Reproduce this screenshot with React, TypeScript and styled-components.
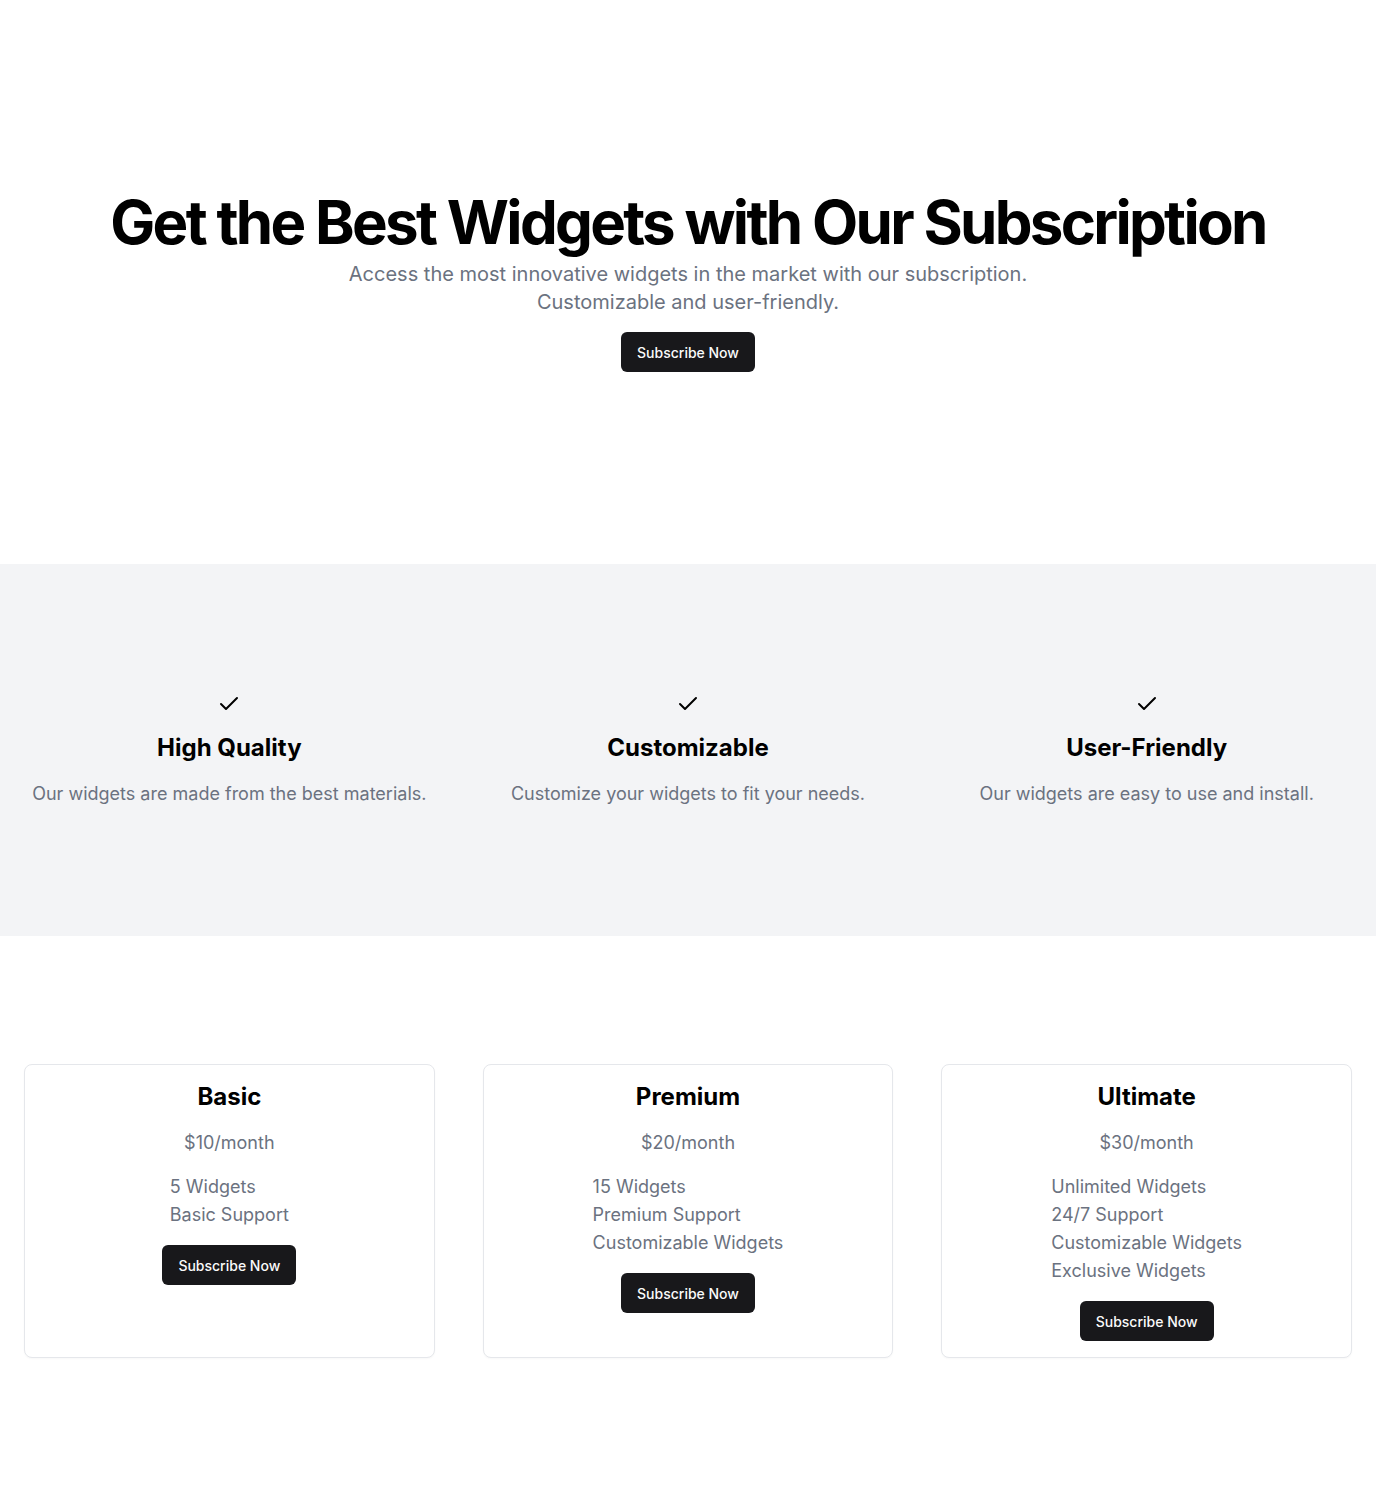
import React from "react";
import styled, { createGlobalStyle } from "styled-components";

const Global = createGlobalStyle`
  * { box-sizing: border-box; }
  html, body { margin: 0; padding: 0; background: #ffffff; }
  body { font-family: Inter, "Noto Sans", sans-serif; color: #000; }
  h1, h2, h3, p, ul { margin: 0; padding: 0; }
`;

const Page = styled.main`
  display: flex;
  flex-direction: column;
  width: 100%;
`;

const Hero = styled.section`
  padding: 192px 24px;
  display: flex;
  flex-direction: column;
  align-items: center;
  text-align: center;
`;

const HeroTitle = styled.h1`
  font-size: 60px;
  line-height: 1;
  font-weight: 700;
  letter-spacing: -0.045em;
  color: #000;
`;

const HeroText = styled.p`
  margin-top: 8px;
  max-width: 700px;
  font-size: 20px;
  line-height: 28px;
  color: #6b7280;
`;

const Button = styled.button`
  height: 40px;
  padding: 0 16px;
  border: none;
  border-radius: 6px;
  background: #18181b;
  color: #fafafa;
  font-family: Inter, sans-serif;
  font-size: 14px;
  font-weight: 500;
  cursor: pointer;
`;

const HeroButton = styled(Button)`
  margin-top: 16px;
`;

const Features = styled.section`
  background: #f3f4f6;
  padding: 128px 24px;
`;

const Grid = styled.div`
  display: grid;
  grid-template-columns: repeat(3, 1fr);
  gap: 48px;
`;

const Feature = styled.div`
  display: flex;
  flex-direction: column;
  align-items: center;
  text-align: center;
  gap: 16px;
`;

const FeatureTitle = styled.h2`
  font-size: 24px;
  line-height: 32px;
  font-weight: 700;
  color: #000;
`;

const FeatureText = styled.p`
  font-size: 18px;
  line-height: 28px;
  color: #6b7280;
`;

const Pricing = styled.section`
  padding: 128px 24px;
`;

const Card = styled.div`
  border: 1px solid #e5e7eb;
  border-radius: 8px;
  background: #fff;
  padding: 16px;
  display: flex;
  flex-direction: column;
  align-items: center;
  gap: 16px;
  box-shadow: 0 1px 2px rgba(0, 0, 0, 0.03);
`;

const PlanName = styled.h3`
  font-size: 24px;
  line-height: 32px;
  font-weight: 700;
  color: #000;
`;

const Price = styled.p`
  font-size: 18px;
  line-height: 28px;
  color: #6b7280;
`;

const List = styled.ul`
  list-style: none;
  text-align: left;
  font-size: 18px;
  line-height: 28px;
  color: #6b7280;
`;

const CheckIcon = () => (
  <svg width="24" height="24" viewBox="0 0 24 24" fill="none" stroke="#000" strokeWidth="2" strokeLinecap="round" strokeLinejoin="round">
    <path d="M20 6 9 17l-5-5" />
  </svg>
);

const features = [
  { title: "High Quality", text: "Our widgets are made from the best materials." },
  { title: "Customizable", text: "Customize your widgets to fit your needs." },
  { title: "User-Friendly", text: "Our widgets are easy to use and install." },
];

const plans = [
  { name: "Basic", price: "$10/month", items: ["5 Widgets", "Basic Support"] },
  { name: "Premium", price: "$20/month", items: ["15 Widgets", "Premium Support", "Customizable Widgets"] },
  { name: "Ultimate", price: "$30/month", items: ["Unlimited Widgets", "24/7 Support", "Customizable Widgets", "Exclusive Widgets"] },
];

export default function App() {
  return (
    <>
      <Global />
      <Page>
        <Hero>
          <HeroTitle>Get the Best Widgets with Our Subscription</HeroTitle>
          <HeroText>
            Access the most innovative widgets in the market with our subscription. Customizable and user-friendly.
          </HeroText>
          <HeroButton>Subscribe Now</HeroButton>
        </Hero>
        <Features>
          <Grid>
            {features.map((f) => (
              <Feature key={f.title}>
                <CheckIcon />
                <FeatureTitle>{f.title}</FeatureTitle>
                <FeatureText>{f.text}</FeatureText>
              </Feature>
            ))}
          </Grid>
        </Features>
        <Pricing>
          <Grid>
            {plans.map((p) => (
              <Card key={p.name}>
                <PlanName>{p.name}</PlanName>
                <Price>{p.price}</Price>
                <List>
                  {p.items.map((i) => (
                    <li key={i}>{i}</li>
                  ))}
                </List>
                <Button>Subscribe Now</Button>
              </Card>
            ))}
          </Grid>
        </Pricing>
      </Page>
    </>
  );
}
